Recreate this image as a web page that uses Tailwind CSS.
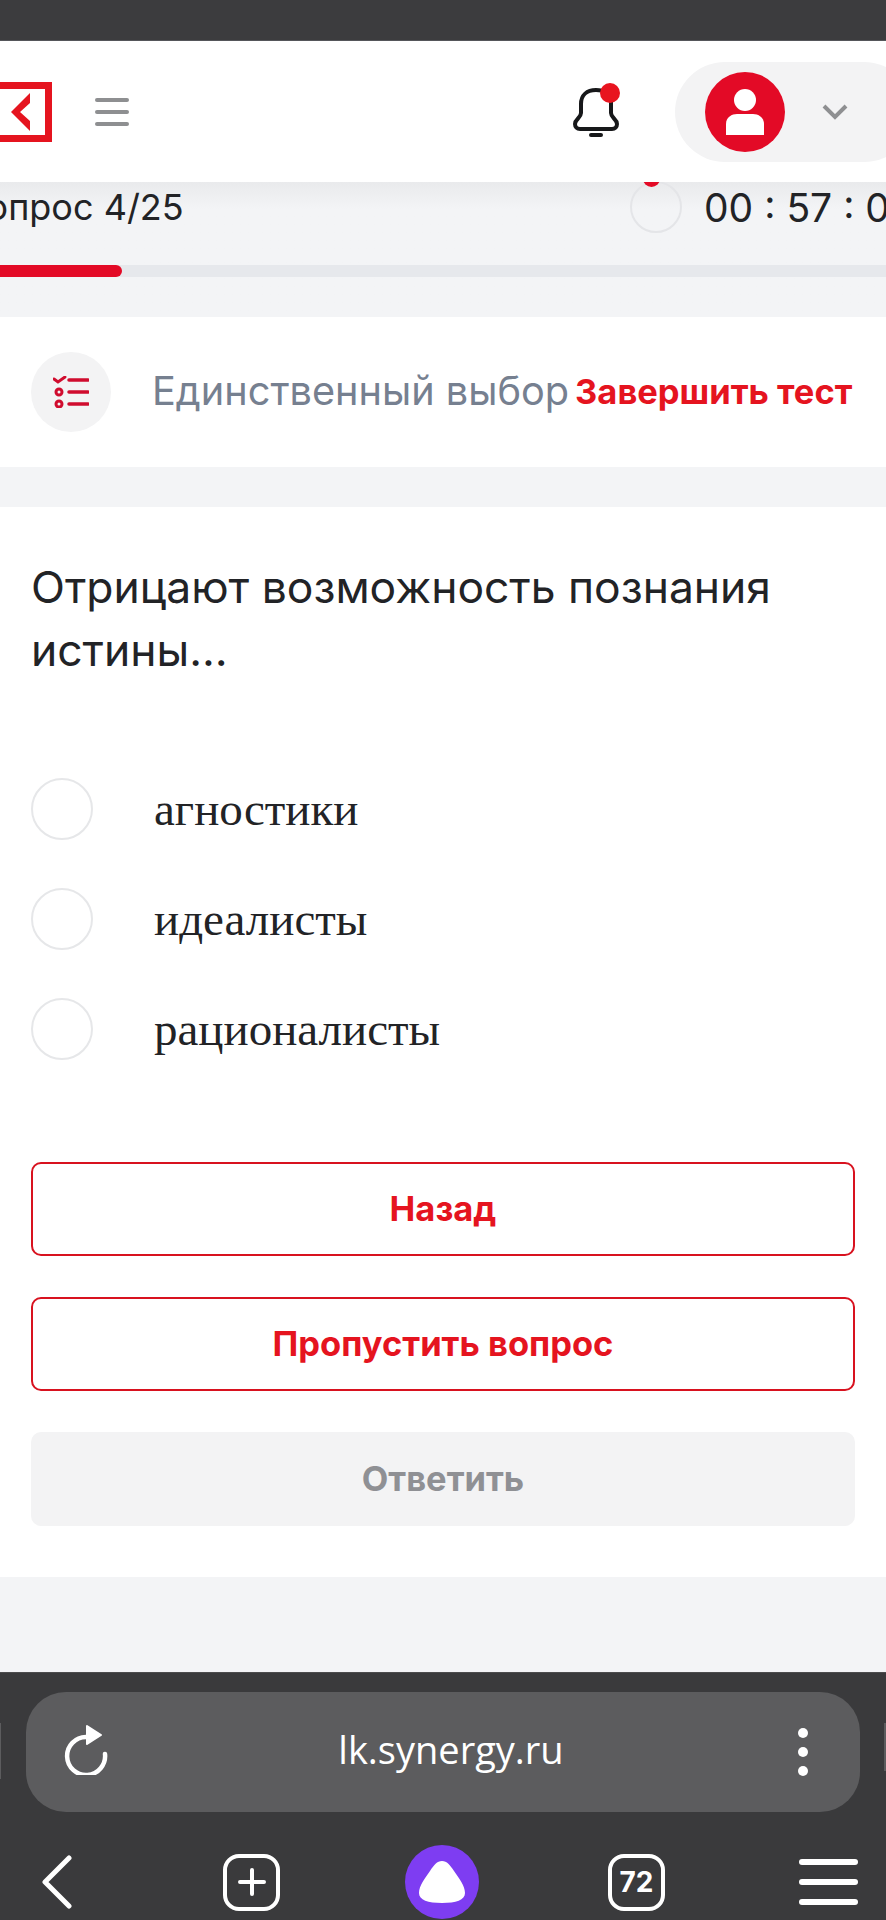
<!DOCTYPE html>
<html lang="ru">
<head>
    <meta charset="UTF-8">
    <meta name="viewport" content="width=device-width, initial-scale=1.0">
    <title>Synergy</title>
    <script src="https://cdn.jsdelivr.net/npm/@tailwindcss/browser@4"></script>
</head>
<body class="bg-[#f3f4f6]">
    <div class="w-[886px] h-[1920px] overflow-hidden flex flex-col font-['Inter',sans-serif] text-[#222326]">
        <!-- Status strip -->
        <div class="h-[41px] shrink-0 bg-[#3c3c3e] border-b border-[#55565a]"></div>

        <!-- Site header -->
        <header class="h-[141px] shrink-0 bg-white flex items-center relative z-10">
            <div class="w-[60px] h-[60px] -ml-[8px] border-[7px] border-[#e5141f] flex items-center justify-end pr-[15px] shrink-0">
                <svg width="19" height="38" viewBox="0 0 19 38"><path d="M19 0 L0 19 L19 38 L19 28 L9 19 L19 10 Z" fill="#e5141f"/></svg>
            </div>
            <div class="ml-[43px] w-[34px] flex flex-col gap-[8px] shrink-0">
                <span class="block h-[4px] rounded-full bg-[#8e8f91]"></span>
                <span class="block h-[4px] rounded-full bg-[#8e8f91]"></span>
                <span class="block h-[4px] rounded-full bg-[#8e8f91]"></span>
            </div>
            <div class="ml-auto relative w-[46px] h-[52px] mr-[56px] shrink-0">
                <svg width="46" height="52" viewBox="0 0 46 52" fill="none" stroke="#17181a" stroke-width="4" stroke-linecap="round" stroke-linejoin="round">
                    <path d="M38 14 C38 8 31 4 23 4 C14 4 8 9 8 18 L8 27 C8 32 2 33 2 38 C2 41 4 43 7 43 L39 43 C42 43 44 41 44 38 C44 33 38 32 38 27 Z"/>
                    <path d="M18 49 L28 49"/>
                </svg>
                <span class="absolute -top-[3px] left-[27px] w-[20px] h-[20px] rounded-full bg-[#e8141f]"></span>
            </div>
            <div class="h-[100px] w-[239px] -mr-[28px] rounded-full bg-[#f3f3f4] flex items-center pl-[30px] shrink-0">
                <div class="w-[80px] h-[80px] rounded-full bg-[#e30a26] flex items-center justify-center shrink-0">
                    <svg width="40" height="46" viewBox="0 0 40 46" fill="#fff"><circle cx="20" cy="11" r="11"/><path d="M1 46 L1 35 C1 28 7 25 12 25 L28 25 C33 25 39 28 39 35 L39 46 Z"/></svg>
                </div>
                <svg class="ml-[37px]" width="26" height="16" viewBox="0 0 26 16" fill="none" stroke="#8e8f91" stroke-width="4"><path d="M2 2 L13 13 L24 2"/></svg>
            </div>
        </header>

        <!-- Progress -->
        <div class="h-[135px] shrink-0 bg-gradient-to-b from-[#e9eaec] to-[#f3f4f6] to-[20%] flex flex-col">
            <div class="flex items-center h-[50px]">
                <span class="text-[36px] leading-none whitespace-nowrap -ml-[37px]">Вопрос 4/25</span>
                <div class="ml-auto relative w-[52px] h-[52px] rounded-full border-[2px] border-[#e4e5e8] shrink-0">
                    <span class="absolute -top-[8px] left-[11px] w-[17px] h-[12px] rounded-b-full bg-[#e30a26]"></span>
                </div>
                <span class="ml-[22px] -mr-[40px] w-[222px] text-[39px] leading-none whitespace-nowrap shrink-0">00 : 57 : 03</span>
            </div>
            <div class="h-[12px] bg-[#e6e8ec] mt-[33px]">
                <div class="h-full w-[122px] bg-[#e30a26] rounded-r-full"></div>
            </div>
        </div>

        <!-- Question type -->
        <div class="h-[150px] shrink-0 bg-white flex items-center pl-[31px]">
            <div class="w-[80px] h-[80px] rounded-full bg-[#f3f3f4] flex items-center justify-center shrink-0">
                <svg width="36" height="32" viewBox="0 0 36 32" fill="none" stroke="#d00c2e" stroke-linecap="round">
                    <path d="M1 3 L5 6 L12 1" stroke-width="3"/>
                    <circle cx="6" cy="16" r="3" stroke-width="3"/>
                    <circle cx="6" cy="28" r="3" stroke-width="3"/>
                    <path d="M16 4 L35 4 M16 16 L35 16 M16 28 L35 28" stroke-width="3.5"/>
                </svg>
            </div>
            <span class="ml-[41px] text-[#768090] text-[39.7px] leading-none whitespace-nowrap">Единственный выбор</span>
            <span class="ml-[6px] text-[#e5141f] text-[34.5px] font-bold leading-none whitespace-nowrap">Завершить тест</span>
        </div>

        <div class="h-[40px] shrink-0"></div>

        <!-- Question card -->
        <main class="h-[1070px] shrink-0 bg-white px-[31px] pt-[49px] flex flex-col">
            <h1 class="text-[44.4px] leading-[63px] font-normal w-[790px]">Отрицают возможность познания истины…</h1>

            <div class="mt-[96px] flex flex-col gap-[48px] font-['Liberation_Serif',serif] text-[47px] leading-[62px]">
                <label class="flex items-center h-[62px]">
                    <span class="w-[62px] h-[62px] rounded-full border-[2px] border-[#e6e7e9] shrink-0"></span>
                    <span class="ml-[61px]">агностики</span>
                </label>
                <label class="flex items-center h-[62px]">
                    <span class="w-[62px] h-[62px] rounded-full border-[2px] border-[#e6e7e9] shrink-0"></span>
                    <span class="ml-[61px]">идеалисты</span>
                </label>
                <label class="flex items-center h-[62px]">
                    <span class="w-[62px] h-[62px] rounded-full border-[2px] border-[#e6e7e9] shrink-0"></span>
                    <span class="ml-[61px]">рационалисты</span>
                </label>
            </div>

            <div class="mt-[102px] flex flex-col gap-[41px] w-[824px] text-[34.5px] font-bold">
                <button class="h-[94px] rounded-[10px] border-[2px] border-[#d8121f] text-[#e5141f]">Назад</button>
                <button class="h-[94px] rounded-[10px] border-[2px] border-[#d8121f] text-[#e5141f]">Пропустить вопрос</button>
                <button class="h-[94px] rounded-[10px] bg-[#f3f3f4] text-[#8f9094]">Ответить</button>
            </div>
        </main>

        <div class="h-[95px] shrink-0"></div>

        <!-- Browser toolbar -->
        <footer class="flex-1 bg-[#3a3a3c] border-t border-[#4c4c4e] pt-[19px] relative">
            <span class="absolute left-0 top-[50px] w-[1px] h-[56px] bg-[#5c5c5e]"></span>
            <span class="absolute right-0 top-[50px] w-[2px] h-[48px] bg-[#5c5c5e]"></span>
            <div class="mx-[26px] h-[120px] w-[834px] rounded-[40px] bg-[#5c5c5e] flex items-center pl-[38px] pr-[52px] text-white">
                <svg class="-mt-[4px]" width="46" height="50" viewBox="0 0 46 50" fill="none" stroke="#fff" stroke-width="4.5" stroke-linecap="round">
                    <path d="M41 29 A19 19 0 1 1 22 12"/>
                    <path d="M23 1 L37 10 L23 19 Z" fill="#fff" stroke="#fff" stroke-width="2" stroke-linejoin="round"/>
                </svg>
                <span class="flex-1 text-center font-['Open_Sans',sans-serif] text-[38px] leading-none pr-[6px] pb-[6px]">lk.synergy.ru</span>
                <div class="flex flex-col gap-[9px]">
                    <span class="block w-[10px] h-[10px] rounded-full bg-white"></span>
                    <span class="block w-[10px] h-[10px] rounded-full bg-white"></span>
                    <span class="block w-[10px] h-[10px] rounded-full bg-white"></span>
                </div>
            </div>
            <div class="mt-[33px] pl-[42px] flex items-center">
                <svg width="30" height="54" viewBox="0 0 30 54" fill="none" stroke="#fff" stroke-width="5" stroke-linecap="round" stroke-linejoin="round"><path d="M27 3 L3 27 L27 51"/></svg>
                <div class="ml-[151px] w-[57px] h-[57px] rounded-[16px] border-[4px] border-white flex items-center justify-center">
                    <svg width="30" height="30" viewBox="0 0 30 30" stroke="#fff" stroke-width="4" stroke-linecap="round"><path d="M15 3 L15 27 M3 15 L27 15"/></svg>
                </div>
                <div class="ml-[125px] w-[74px] h-[74px] rounded-full bg-[#7e3df2] flex items-center justify-center">
                    <svg width="48" height="44" viewBox="0 0 48 44" fill="#fff"><path d="M24 1 C29 1 32 5 36 11 C41 18 47 26 47 33 C47 40 38 43 24 43 C10 43 1 40 1 33 C1 26 7 18 12 11 C16 5 19 1 24 1 Z"/></svg>
                </div>
                <div class="ml-[129px] w-[57px] h-[57px] rounded-[16px] border-[4px] border-white flex items-center justify-center text-white text-[28px] font-bold leading-none">72</div>
                <div class="ml-[134px] w-[59px] flex flex-col gap-[14px]">
                    <span class="block h-[6px] rounded-full bg-white"></span>
                    <span class="block h-[6px] rounded-full bg-white"></span>
                    <span class="block h-[6px] rounded-full bg-white"></span>
                </div>
            </div>
        </footer>
    </div>
</body>
</html>
